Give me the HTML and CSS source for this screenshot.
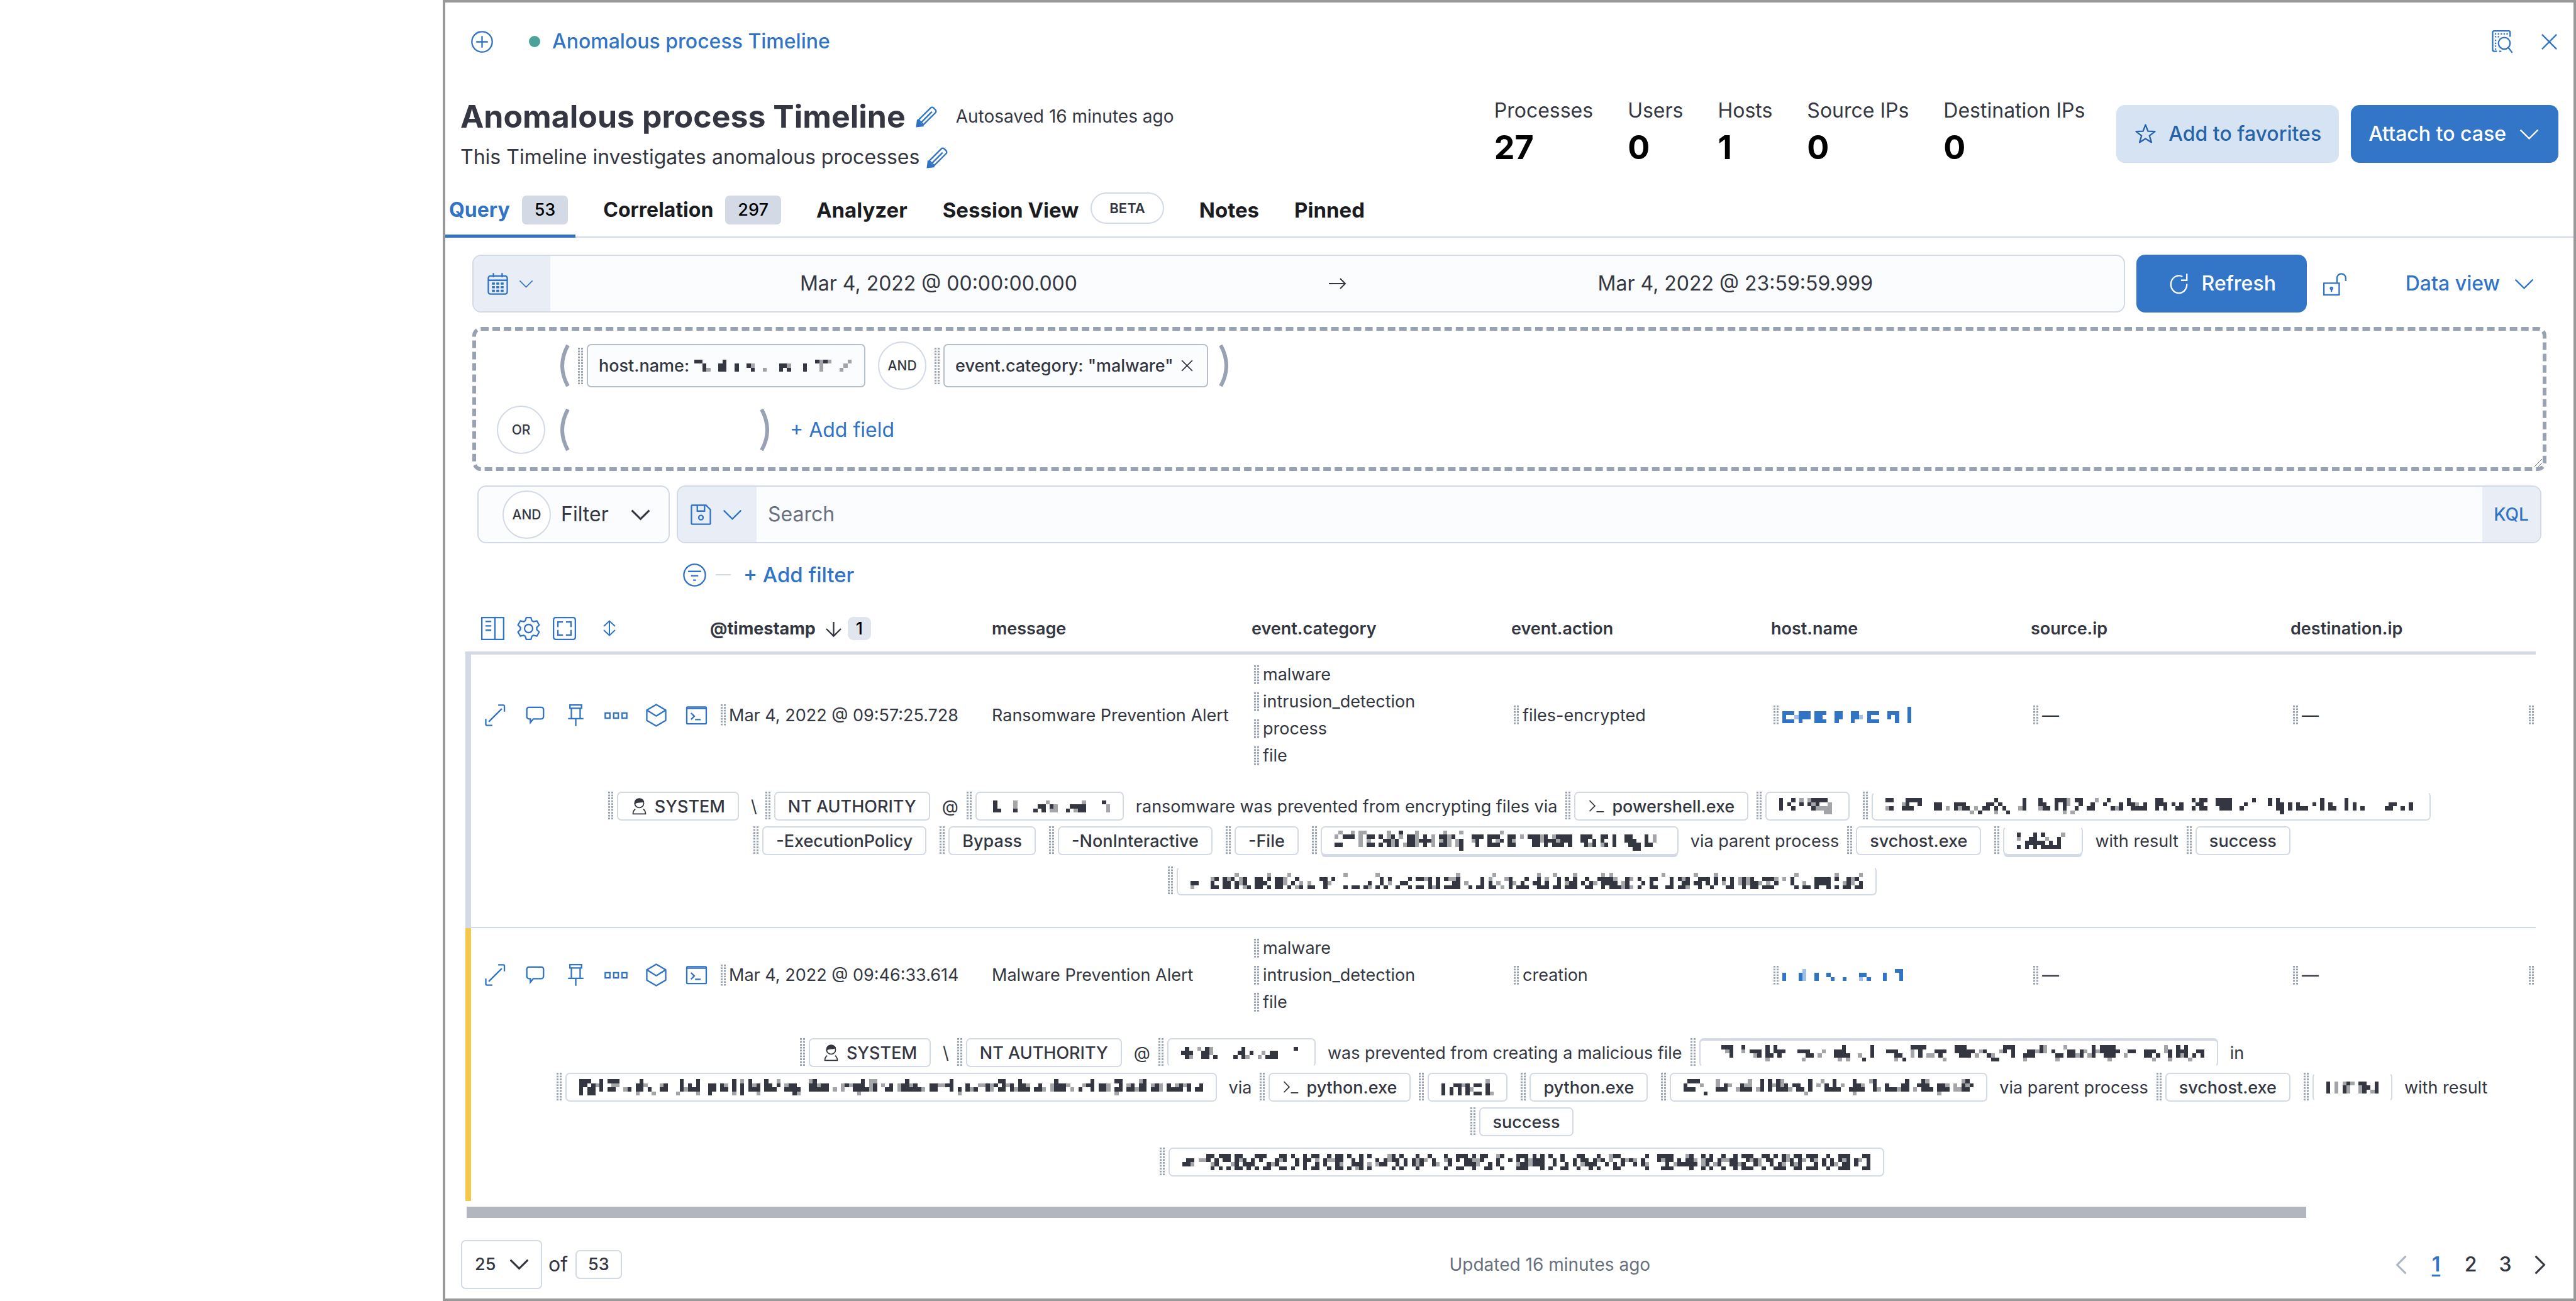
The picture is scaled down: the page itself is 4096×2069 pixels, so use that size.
FILE: index.html
```
<!DOCTYPE html>
<html lang="en">
<head>
<meta charset="utf-8">
<meta name="viewport" content="width=device-width, initial-scale=1">
<title>Anomalous process Timeline</title>
<link rel="stylesheet" href="styles.css">
<script src="script.js" defer></script>
</head>
<body>
<svg class="sprite" aria-hidden="true">
  <symbol id="i-plus" viewBox="0 0 16 16"><circle cx="8" cy="8" r="7"/><path d="M8 4v8M4 8h8"/></symbol>
  <symbol id="i-pencil" viewBox="0 0 16 16"><path d="M1.6 14.4l.7-4L10.700 2a1.400 1.400 0 0 1 2 0l1.300 1.300a1.400 1.400 0 0 1 0 2L5.600 13.700zM4.600 11.600l7-7M2.500 10.200l3.300 3.300"/><path class="solid" d="M1.200 14.800l.5-4 3.500 3.500z"/></symbol>
  <symbol id="i-calendar" viewBox="0 0 16 16"><rect x="1.500" y="2.500" width="13" height="12.500" rx="1.500"/><path d="M1.500 5.500h13M5 .5v3M11 .5v3"/><path class="solid" stroke="none" d="M4 7h2v1.500H4zM7 7h2v1.500H7zM10 7h2v1.500h-2zM4 9.500h2V11H4zM7 9.500h2V11H7zM10 9.500h2V11h-2zM4 12h2v1.500H4zM7 12h2v1.500H7zM10 12h2v1.500h-2z"/></symbol>
  <symbol id="i-down" viewBox="0 0 16 16"><path d="M2 5l6 6 6-6"/></symbol>
  <symbol id="i-left" viewBox="0 0 16 16"><path d="M11 2L5 8l6 6"/></symbol>
  <symbol id="i-right" viewBox="0 0 16 16"><path d="M5 2l6 6-6 6"/></symbol>
  <symbol id="i-arrow" viewBox="0 0 16 16"><path d="M1.500 8h13M10.500 4l4 4-4 4"/></symbol>
  <symbol id="i-star" viewBox="0 0 16 16"><path stroke-linejoin="round" d="M8 1.500l1.700 4.400 4.800.2-3.800 2.900 1.400 4.600L8 11l-4.100 2.600 1.400-4.600-3.800-2.900 4.800-.2z"/></symbol>
  <symbol id="i-inspect" viewBox="0 0 16 16"><path d="M13.500 4.500v-3a1 1 0 0 0-1-1h-10a1 1 0 0 0-1 1v12a1 1 0 0 0 1 1h2"/><circle cx="9.500" cy="9" r="4"/><path d="M12.300 12l2.700 3.500M6 14.500h1.500"/><path stroke-dasharray="1 1" d="M3 2.500h9M3 4.500h3.500M3.500 6.500v7"/></symbol>
  <symbol id="i-cross" viewBox="0 0 16 16"><path d="M3 3l10 10M13 3L3 13"/></symbol>
  <symbol id="i-refresh" viewBox="0 0 16 16"><path d="M13.500 8A5.500 6 0 1 1 10.500 3M13.500 1v4.500H9.500"/></symbol>
  <symbol id="i-lock" viewBox="0 0 16 16"><path d="M.5 7.500h10.500v8H.5zM9.500 7.500V4a3 3 0 0 1 6 0v2"/><circle cx="5.700" cy="11" r=".7"/><path d="M5.700 11.500v2"/></symbol>
  <symbol id="i-save" viewBox="0 0 16 16"><path d="M1.500 2a.5.500 0 0 1 .5-.5h9.500l3 3V14a.5.500 0 0 1-.5.500H2a.5.500 0 0 1-.5-.5zM5.500 1.500v4h5v-4"/><circle cx="8" cy="10" r="1.500"/></symbol>
  <symbol id="i-filter" viewBox="0 0 16 16"><circle cx="8" cy="8" r="7.400"/><path d="M3.500 5.500h9M5.500 8.500h5M7 11.500h2"/></symbol>
  <symbol id="i-fields" viewBox="0 0 16 16"><path d="M.5.500h15v15H.5zM9.500.500v15M3 3.200h4M3 6.200h4M3 9.200h4"/></symbol>
  <symbol id="i-gear" viewBox="0 0 16 16"><path stroke-linejoin="round" d="M6.400.500h3.200l.7 2.200 1.100.6 2.300-.5 1.600 2.800-1.700 1.700v1.400l1.700 1.700-1.600 2.800-2.300-.5-1.100.6-.7 2.200H6.400l-.7-2.200-1.100-.6-2.300.5L.7 10.400l1.700-1.700V7.300L.7 5.600l1.600-2.800 2.300.5 1.100-.6z"/><circle cx="8" cy="8" r="2.800"/></symbol>
  <symbol id="i-full" viewBox="0 0 16 16"><rect x=".5" y=".5" width="15" height="15" rx="1.500"/><path d="M3.500 7V3.500H7M9 3.500h3.500V7M12.500 9v3.500H9M7 12.500H3.500V9"/></symbol>
  <symbol id="i-sort" viewBox="0 0 16 16"><path d="M8 2.500v11M3.500 6.500L8 2.300l4.500 4.200M3.500 9.500L8 13.700l4.500-4.200"/></symbol>
  <symbol id="i-sortdown" viewBox="0 0 16 16"><path d="M8 3.500v9.500M3 8.200l5 5 5-5"/></symbol>
  <symbol id="i-expand" viewBox="0 0 16 16"><path d="M3.500 12.500l9-9M10 1h3.500a.8.800 0 0 1 .8.800V5.500M6 15H2.300a.8.800 0 0 1-.8-.8V10.500"/></symbol>
  <symbol id="i-comment" viewBox="0 0 16 16"><path d="M3.500 2.500h8.500a1.500 1.500 0 0 1 1.500 1.500v5a1.500 1.500 0 0 1-1.500 1.500H6.500L4.500 13v-2.500h-1A1.500 1.500 0 0 1 2 9V4a1.500 1.500 0 0 1 1.500-1.500z"/></symbol>
  <symbol id="i-pin" viewBox="0 0 16 16"><path d="M4 .9h8v2.300H4zM5 3.200v7M11 3.200v7M2.700 10.300h10.600M8 10.500v5"/></symbol>
  <symbol id="i-dots" viewBox="0 0 16 16"><path d="M.6 6.400h3.200v3.600H.6zM6.400 6.400h3.200v3.600H6.400zM12.200 6.400h3.200v3.600h-3.200z"/></symbol>
  <symbol id="i-cube" viewBox="0 0 16 16"><path stroke-linejoin="round" d="M8 .6l6.500 3.800v7.200L8 15.400l-6.500-3.800V4.400zM1.500 4.400L8 8.500l6.500-4.100"/></symbol>
  <symbol id="i-session" viewBox="0 0 16 16"><rect x="1.300" y="2.300" width="13.400" height="11.600" rx=".6"/><path d="M1.300 3.300h13.400M4.200 6.500l2.300 2.200-2.300 2.200M7 11h3.800"/></symbol>
  <symbol id="i-user" viewBox="0 0 16 16"><circle cx="8" cy="5" r="4.200"/><path d="M4.300 10.500c-1.300.9-2.200 2.500-2.200 4.500h11.800c0-2-.9-3.600-2.200-4.500"/><path class="solid" d="M3.800 5.200C4.500 4.600 5 4 8 4s3.500-.6 4-.8C11.300 1.600 10 .8 8 .8 5.500.800 3.700 2.500 3.800 5.200z"/></symbol>
  <symbol id="i-prompt" viewBox="0 0 16 16"><path d="M1.500 2.500l5 5-5 5M8 13h7"/></symbol>
  <symbol id="i-open" viewBox="0 0 15 67"><path stroke-width="6" d="M12 1Q-6 34 12 66"/></symbol>
  <symbol id="i-close" viewBox="0 0 15 67"><path stroke-width="6" d="M3 1Q21 34 3 66"/></symbol>
</svg>

<main class="panel">
  <div class="topbar">
    <button class="ghost" aria-label="Create new timeline"><svg class="icon"><use href="#i-plus"/></svg></button>
    <span class="status"></span>
    <a class="crumb" href="#timeline">Anomalous process Timeline</a>
    <button class="ghost push" aria-label="Inspect"><svg class="icon"><use href="#i-inspect"/></svg></button>
    <button class="ghost" aria-label="Close"><svg class="icon"><use href="#i-cross"/></svg></button>
  </div>

  <header class="header" id="timeline">
    <div class="heading">
      <div class="title-row">
        <h1>Anomalous process Timeline</h1>
        <button class="ghost" aria-label="Edit title"><svg class="icon"><use href="#i-pencil"/></svg></button>
        <span class="autosaved">Autosaved 16 minutes ago</span>
      </div>
      <div class="desc-row">
        <p>This Timeline investigates anomalous processes</p>
        <button class="ghost" aria-label="Edit description"><svg class="icon"><use href="#i-pencil"/></svg></button>
      </div>
    </div>
    <dl class="stats">
      <div><dt>Processes</dt><dd>27</dd></div>
      <div><dt>Users</dt><dd>0</dd></div>
      <div><dt>Hosts</dt><dd>1</dd></div>
      <div><dt>Source IPs</dt><dd>0</dd></div>
      <div><dt>Destination IPs</dt><dd>0</dd></div>
    </dl>
    <div class="actions">
      <button class="btn btn-soft"><svg class="icon"><use href="#i-star"/></svg>Add to favorites</button>
      <button class="btn btn-fill">Attach to case<svg class="icon"><use href="#i-down"/></svg></button>
    </div>
  </header>

  <nav class="tabs" role="tablist">
    <button role="tab" class="tab is-active">Query <span class="badge">53</span></button>
    <button role="tab" class="tab">Correlation <span class="badge">297</span></button>
    <button role="tab" class="tab tab-plain">Analyzer</button>
    <button role="tab" class="tab tab-plain">Session View <span class="beta">BETA</span></button>
    <button role="tab" class="tab tab-plain">Notes</button>
    <button role="tab" class="tab tab-plain">Pinned</button>
  </nav>

  <section class="date-row">
    <div class="date-bar">
      <button class="prepend" aria-label="Date quick select"><svg class="icon"><use href="#i-calendar"/></svg><svg class="icon icon-s"><use href="#i-down"/></svg></button>
      <button class="date">Mar 4, 2022 @ 00:00:00.000</button>
      <svg class="icon icon-m date-arrow"><use href="#i-arrow"/></svg>
      <button class="date">Mar 4, 2022 @ 23:59:59.999</button>
    </div>
    <button class="btn btn-fill refresh"><svg class="icon"><use href="#i-refresh"/></svg>Refresh</button>
    <button class="ghost lock" aria-label="Lock date"><svg class="icon"><use href="#i-lock"/></svg></button>
    <button class="ghost data-view">Data view<svg class="icon"><use href="#i-down"/></svg></button>
  </section>

  <section class="builder">
    <div class="group">
      <span class="op-space"></span>
      <svg class="paren"><use href="#i-open"/></svg>
      <span class="handle tall"></span>
      <span class="clause">host.name:<span class="mosaic" data-rows="3" data-ink="443000370030021000000321000300404000000" data-tint="000100000000002001000002000000070400124"></span></span>
      <span class="op">AND</span>
      <span class="handle tall"></span>
      <span class="clause">event.category: "malware"<button class="ghost" aria-label="Remove"><svg class="icon icon-s"><use href="#i-cross"/></svg></button></span>
      <svg class="paren"><use href="#i-close"/></svg>
    </div>
    <div class="group">
      <span class="op">OR</span>
      <svg class="paren"><use href="#i-open"/></svg>
      <span class="empty"></span>
      <svg class="paren"><use href="#i-close"/></svg>
      <button class="ghost add-field">+ Add field</button>
    </div>
    <svg class="grip" viewBox="0 0 14 14"><path d="M1 13L13 1M7 13l6-6"/></svg>
  </section>

  <section class="search-row">
    <button class="filter-box"><span class="op">AND</span>Filter<svg class="icon"><use href="#i-down"/></svg></button>
    <div class="search">
      <button class="prepend" aria-label="Saved queries"><svg class="icon"><use href="#i-save"/></svg><svg class="icon"><use href="#i-down"/></svg></button>
      <input type="search" placeholder="Search" aria-label="Search">
      <button class="kql">KQL</button>
    </div>
  </section>

  <div class="filters">
    <button class="ghost" aria-label="Filter options"><svg class="icon"><use href="#i-filter"/></svg></button>
    <span class="rule"></span>
    <button class="ghost add-filter">+ Add filter</button>
  </div>

  <div class="results">
    <table class="grid">
      <colgroup><col class="c-act"><col class="c-time"><col class="c-std"><col class="c-std"><col class="c-std"><col class="c-std"><col class="c-std"><col><col class="c-end"></colgroup>
      <thead>
        <tr>
          <th><span class="tools">
            <button class="ghost" aria-label="Fields"><svg class="icon"><use href="#i-fields"/></svg></button>
            <button class="ghost" aria-label="Settings"><svg class="icon"><use href="#i-gear"/></svg></button>
            <button class="ghost" aria-label="Full screen"><svg class="icon"><use href="#i-full"/></svg></button>
            <button class="ghost sort" aria-label="Sort fields"><svg class="icon icon-m"><use href="#i-sort"/></svg></button>
          </span></th>
          <th><span class="sorted">@timestamp<svg class="icon"><use href="#i-sortdown"/></svg><span class="count">1</span></span></th>
          <th>message</th><th>event.category</th><th>event.action</th><th>host.name</th><th>source.ip</th><th>destination.ip</th><th></th>
        </tr>
      </thead>
      <tbody class="event">
        <tr>
          <td><span class="row-tools">
            <button class="ghost" aria-label="Expand"><svg class="icon"><use href="#i-expand"/></svg></button>
            <button class="ghost" aria-label="Comment"><svg class="icon"><use href="#i-comment"/></svg></button>
            <button class="ghost" aria-label="Pin"><svg class="icon"><use href="#i-pin"/></svg></button>
            <button class="ghost" aria-label="More"><svg class="icon"><use href="#i-dots"/></svg></button>
            <button class="ghost" aria-label="Analyze"><svg class="icon"><use href="#i-cube"/></svg></button>
            <button class="ghost" aria-label="Session"><svg class="icon"><use href="#i-session"/></svg></button>
          </span></td>
          <td><span class="cell time"><i class="handle"></i>Mar 4, 2022 @ 09:57:25.728</span></td>
          <td>Ransomware Prevention Alert</td>
          <td><span class="cell"><i class="handle"></i>malware</span><span class="cell"><i class="handle"></i>intrusion_detection</span><span class="cell"><i class="handle"></i>process</span><span class="cell"><i class="handle"></i>file</span></td>
          <td><span class="cell"><i class="handle"></i>files-encrypted</span></td>
          <td><a class="cell" href="#host"><i class="handle"></i><span class="mosaic" data-rows="4" data-ink="7550766077500760076007550064700f" data-tint="00020000020002000002000000200000"></span></a></td>
          <td><span class="cell"><i class="handle"></i>—</span></td>
          <td><span class="cell"><i class="handle"></i>—</span></td>
          <td><span class="cell"><i class="handle"></i></span></td>
        </tr>
        <tr>
          <td colspan="9" class="story">
            <div class="line">
              <span class="field"><i class="handle"></i><span class="chip"><svg class="icon icon-s"><use href="#i-user"/></svg>SYSTEM</span></span>
              <span class="word">\</span>
              <span class="field"><i class="handle"></i><span class="chip">NT AUTHORITY</span></span>
              <span class="word">@</span>
              <span class="field"><i class="handle"></i><span class="chip"><span class="mosaic" data-rows="3" data-ink="071000100001230200012233000040" data-tint="000000600000204130000104000003"></span></span></span>
              <span class="word">ransomware was prevented from encrypting files via</span>
              <span class="field tight"><i class="handle"></i><span class="chip"><svg class="icon icon-s"><use href="#i-prompt"/></svg>powershell.exe</span></span>
              <span class="field"><i class="handle"></i><span class="chip"><span class="mosaic" data-rows="4" data-ink="e04a0404ac8800" data-tint="00000808422370"></span></span></span>
              <span class="field"><i class="handle"></i><span class="chip open-top"><span class="mosaic" data-rows="4" data-ink="8a002ea8c000660006462001264a421000e000c620e8e00ac02600482060c622600ec6042600a4ea00ceee002408000c0e7060622040e06200e06020000026402060" data-tint="200064000000000200200120040100000220006000201c12000080000200004" ></span></span></span>
            </div>
            <div class="line">
              <span class="field"><i class="handle"></i><span class="chip">-ExecutionPolicy</span></span>
              <span class="field"><i class="handle"></i><span class="chip">Bypass</span></span>
              <span class="field"><i class="handle"></i><span class="chip">-NonInteractive</span></span>
              <span class="field"><i class="handle"></i><span class="chip">-File</span></span>
              <span class="field"><i class="handle"></i><span class="chip smear"><span class="mosaic" data-rows="5" data-ink="22888000aa0a4686g0ee04e400ae0807008e80eaa40ea0008ee0e46aece00ce860ca0e00ce730e2000" data-tint="8g00g0ug40000o608200u000e04ge06g00c080024g00e080000c00e60060008200e0000006000e0c00"></span></span></span>
              <span class="word">via parent process</span>
              <span class="field"><i class="handle"></i><span class="chip">svchost.exe</span></span>
              <span class="field"><i class="handle"></i><span class="chip smear open-top"><span class="mosaic" data-rows="4" data-ink="9036f2b131700" data-tint="4000800400080"></span></span></span>
              <span class="word">with result</span>
              <span class="field last"><i class="handle"></i><span class="chip">success</span></span>
            </div>
            <div class="line spaced">
              <span class="field last"><i class="handle"></i><span class="chip open-top"><span class="mosaic" data-rows="4" data-ink="22000350734306107725077012410110470400101101201614012250550707051370010170310007013502713017053702530476731070052075001705360274616041700707305552000610110766705017053" data-tint="10000400040861000008000680120200002000800000108002000000004010004480200000682140200000804080061800402080840305000020080200610800208060206060020204040080200600008020608"></span></span></span>
            </div>
          </td>
        </tr>
      </tbody>
      <tbody class="event alert">
        <tr>
          <td><span class="row-tools">
            <button class="ghost" aria-label="Expand"><svg class="icon"><use href="#i-expand"/></svg></button>
            <button class="ghost" aria-label="Comment"><svg class="icon"><use href="#i-comment"/></svg></button>
            <button class="ghost" aria-label="Pin"><svg class="icon"><use href="#i-pin"/></svg></button>
            <button class="ghost" aria-label="More"><svg class="icon"><use href="#i-dots"/></svg></button>
            <button class="ghost" aria-label="Analyze"><svg class="icon"><use href="#i-cube"/></svg></button>
            <button class="ghost" aria-label="Session"><svg class="icon"><use href="#i-session"/></svg></button>
          </span></td>
          <td><span class="cell time"><i class="handle"></i>Mar 4, 2022 @ 09:46:33.614</span></td>
          <td>Malware Prevention Alert</td>
          <td><span class="cell"><i class="handle"></i>malware</span><span class="cell"><i class="handle"></i>intrusion_detection</span><span class="cell"><i class="handle"></i>file</span></td>
          <td><span class="cell"><i class="handle"></i>creation</span></td>
          <td><a class="cell" href="#host"><i class="handle"></i><span class="mosaic" data-rows="3" data-ink="300030003002100100022100030047" data-tint="000007000000000000010000000000"></span></a></td>
          <td><span class="cell"><i class="handle"></i>—</span></td>
          <td><span class="cell"><i class="handle"></i>—</span></td>
          <td><span class="cell"><i class="handle"></i></span></td>
        </tr>
        <tr>
          <td colspan="9" class="story">
            <div class="line">
              <span class="field"><i class="handle"></i><span class="chip"><svg class="icon icon-s"><use href="#i-user"/></svg>SYSTEM</span></span>
              <span class="word">\</span>
              <span class="field"><i class="handle"></i><span class="chip">NT AUTHORITY</span></span>
              <span class="word">@</span>
              <span class="field"><i class="handle"></i><span class="chip open-bottom"><span class="mosaic" data-rows="3" data-ink="272003701000012702000133000040" data-tint="001040060000000410012102000000"></span></span></span>
              <span class="word">was prevented from creating a malicious file</span>
              <span class="field"><i class="handle"></i><span class="chip smear-top"><span class="mosaic" data-rows="4" data-ink="0088e00804460e2c6400044620000066e200010e00044621088e80046400cee640042110c8e002660c004220660600e0ceee400440066420060e4e0246" data-tint="0004600400200104200004100024002141002000000401000600022001000060024002140020010040c00108002042040010002040020100c1042010"></span></span></span>
              <span class="word">in</span>
            </div>
            <div class="line">
              <span class="field"><i class="handle"></i><span class="chip"><span class="mosaic" data-rows="4" data-ink="fcb70e0aa800206e020026000e062e00760620e070e260e62402672006e26600004066e2060026006e2620066004e02060200604ae060e62026000e66000204e06600ae02606e02600622606026" data-tint="0031400044020010401040001020010020044010c00410060c0420100e06440206440100ec04020600440202044020100204406002402044000206e00420040204060100402c00406002404"></span></span></span>
              <span class="word">via</span>
              <span class="field tight"><i class="handle"></i><span class="chip"><svg class="icon icon-s"><use href="#i-prompt"/></svg>python.exe</span></span>
              <span class="field"><i class="handle"></i><span class="chip"><span class="mosaic" data-rows="4" data-ink="7034707055070" data-tint="0020040200081"></span></span></span>
              <span class="field"><i class="handle"></i><span class="chip">python.exe</span></span>
              <span class="field"><i class="handle"></i><span class="chip"><span class="mosaic" data-rows="4" data-ink="6aa8010022600062200e0e0e2604620e00062e2002e6200e0062206e004e6206620006a4" data-tint="00204100c0240204e0200040e02040100480200400104080204002000240c00104062c4"></span></span></span>
              <span class="word">via parent process</span>
              <span class="field"><i class="handle"></i><span class="chip">svchost.exe</span></span>
              <span class="field"><i class="handle"></i><span class="chip open-top open-bottom"><span class="mosaic" data-rows="3" data-ink="7000340047207" data-tint="0070434030010"></span></span></span>
              <span class="word">with result</span>
            </div>
            <div class="line">
              <span class="field last"><i class="handle"></i><span class="chip">success</span></span>
            </div>
            <div class="line spaced">
              <span class="field last"><i class="handle"></i><span class="chip"><span class="mosaic" data-rows="4" data-ink="264000c969cd0f96369c93069d0960f49b0690fd0962f0904260d696069608600960d9e6b0c93069040dbf0e6f0960d3069c6369420b9604206900c9fd0626f2096d06906f0bd9609c693d069f09db06960dbf0609f" data-tint="002044020100204600040020c40020040600440200410020600c4002006040020c004000460020c004020060040020400602004400c200406002004400200c040600204400200406004002c0204006040020460040"></span></span></span>
            </div>
          </td>
        </tr>
      </tbody>
    </table>
    <div class="scroll"></div>
  </div>

  <footer class="footer">
    <span class="select"><select aria-label="Rows per page"><option>25</option></select><svg class="icon"><use href="#i-down"/></svg></span>
    <span class="of">of</span>
    <span class="chip total">53</span>
    <span class="updated">Updated 16 minutes ago</span>
    <nav class="pages">
      <button class="ghost off" aria-label="Previous page"><svg class="icon"><use href="#i-left"/></svg></button>
      <a class="on" href="#1">1</a><a href="#2">2</a><a href="#3">3</a>
      <button class="ghost" aria-label="Next page"><svg class="icon"><use href="#i-right"/></svg></button>
    </nav>
  </footer>
</main>
</body>
</html>
```
FILE: styles.css
```
:root {
  --blue: #3173c5;
  --text: #343741;
  --line: #d3dae6;
  --muted: #98a2b3;
  --field: #fbfcfd;
}
* { box-sizing: border-box; }
body { margin: 0; background: #fff; color: var(--text); font: 400 32px/44px Inter, "Liberation Sans", sans-serif; }
button, input, select { font: inherit; color: inherit; margin: 0; padding: 0; border: 0; background: none; }
a { color: var(--blue); text-decoration: none; }
h1, p, dl, dd { margin: 0; }
i { font-style: normal; }

.sprite { position: absolute; width: 0; height: 0; }
.icon { width: 37px; height: 37px; flex: none; }
.icon-m { width: 32px; height: 32px; }
.icon-s { width: 27px; height: 27px; }
symbol, .icon, .paren { fill: none; stroke: currentColor; }
.solid { fill: currentColor; }
.ghost { display: inline-flex; align-items: center; color: var(--blue); }

.panel { margin-left: 704px; min-height: 100vh; border: 4px solid #999; background: #fff; }

.topbar { display: flex; align-items: center; height: 124px; padding: 0 20px 0 40px; }
.status { width: 18px; height: 18px; margin: 0 19px 0 56px; border-radius: 50%; background: #4aa399; }
.crumb { font-weight: 500; }
.push { margin: 0 38px 0 auto; }

.header { display: flex; align-items: flex-start; padding: 26px 24px 14px; height: 158px; }
.heading { flex: 1; }
.title-row, .desc-row { display: flex; align-items: center; }
.title-row { height: 62px; margin-bottom: 12px; gap: 15px; }
h1 { font-size: 50px; line-height: 62px; font-weight: 700; }
.autosaved { margin-left: 13px; font-size: 28px; }
.desc-row { gap: 10px; }
.stats { display: flex; gap: 55px; margin-right: 50px; }
.stats dd { margin-top: 11px; font-size: 52px; line-height: 52px; font-weight: 700; color: #000; }
.actions { display: flex; gap: 19px; margin-top: 13px; }
.btn { display: inline-flex; align-items: center; justify-content: center; gap: 18px; height: 92px; padding: 0 28px; border-radius: 14px; font-weight: 500; white-space: nowrap; }
.btn-soft { background: #d6e3f3; color: #2663a8; }
.btn-fill { background: #3376c8; color: #fff; }

.tabs { display: flex; gap: 38px; height: 92px; border-bottom: 2px solid var(--line); }
.tab { display: flex; align-items: center; gap: 19px; height: 92px; padding: 3px 12px 0 6px; font-weight: 700; color: #1a1c21; }
.tab.is-active { color: var(--blue); border-bottom: 5px solid var(--blue); padding-top: 8px; }
.tab-plain { font-size: 33px; }
.badge { padding: 0 20px; border-radius: 7px; background: var(--line); color: #000; font-size: 27px; line-height: 46px; font-weight: 500; }
.beta { padding: 0 28px; border: 2px solid var(--line); border-radius: 25px; color: var(--text); font-size: 22px; line-height: 46px; font-weight: 600; margin-top: -6px; }

.date-row { display: flex; align-items: center; padding: 27px 60px 0 43px; }
.date-bar { display: flex; flex: 1; align-items: center; height: 92px; border: 2px solid var(--line); border-radius: 14px; background: var(--field); overflow: hidden; }
.prepend { display: flex; align-items: center; justify-content: center; gap: 13px; align-self: stretch; width: 122px; padding-right: 6px; background: #e9edf5; color: var(--blue); }
.date { flex: 1; text-align: center; }
.refresh { width: 271px; margin-left: 18px; }
.lock { margin: 0 94px 0 26px; }
.data-view { gap: 20px; font-weight: 500; }

.builder { position: relative; display: grid; gap: 25px; margin: 23px 43px 0; padding: 17px 33px 21px; border: 6px dashed var(--muted); border-radius: 14px; }
.group { display: flex; align-items: center; }
.op, .op-space { width: 77px; height: 77px; flex: none; }
.op { border: 2px solid var(--line); border-radius: 50%; background: #fff; font-size: 21px; line-height: 73px; font-weight: 500; text-align: center; }
.paren { width: 15px; height: 67px; color: var(--muted); }
.op + .paren, .op-space + .paren { margin-left: 24px; }
.clause + .op { margin-left: 20px; }
.handle { display: block; flex: none; width: 8px; height: 46px; background: conic-gradient(from 270deg at 3px 3px, #98a2b3 90deg, transparent 0) 0 0 / 5px 10%; }
.handle.tall { height: 58px; margin: 0 6px 0 13px; background-size: 5px 8%; }
.clause { display: flex; align-items: center; gap: 8px; height: 69px; padding: 0 18px 0 17px; border: 2px solid #b8bfcc; border-radius: 7px; background: var(--field); font-size: 27px; font-weight: 500; white-space: nowrap; }
.clause .mosaic { margin-right: 2px; }
.clause .ghost { color: var(--text); }
.clause + .paren { margin-left: 17px; }
.empty { width: 302px; }
.add-field { margin-left: 33px; }
.grip { position: absolute; right: 0; bottom: 0; width: 14px; height: 14px; stroke: #69707d; }

.search-row { display: flex; gap: 11px; padding: 23px 51px 0; }
.filter-box { display: flex; align-items: center; width: 306px; height: 92px; padding-left: 38px; border: 2px solid var(--line); border-radius: 14px; background: var(--field); }
.filter-box .op { margin-right: 16px; }
.filter-box .icon { margin-left: 32px; stroke-width: 1.3; }
.search { display: flex; flex: 1; height: 92px; border: 2px solid var(--line); border-radius: 14px; background: var(--field); overflow: hidden; }
.search .prepend { width: 125px; padding-right: 2px; }
.search input { flex: 1; padding-left: 18px; outline: 0; appearance: none; }
.search input::placeholder { color: #69707d; opacity: 1; }
.kql { width: 92px; background: #e9edf5; color: var(--blue); font-size: 28px; font-weight: 500; }

.filters { display: flex; align-items: center; padding: 28px 0 0 378px; }
.rule { width: 24px; height: 2px; margin: 0 20px 0 15px; background: var(--line); }
.add-filter { font-size: 33px; font-weight: 500; }

.results { margin: 26px 60px 0 32px; }
.grid { width: 100%; table-layout: fixed; border-collapse: separate; border-spacing: 0; font-size: 27px; line-height: 43px; }
.c-act { width: 389px; }
.c-time { width: 448px; }
.c-std { width: 413px; }
.c-end { width: 11px; }
th, td { padding: 0; text-align: left; white-space: nowrap; }
th { height: 79px; border-bottom: 5px solid var(--line); font-weight: 600; }
.tools, .row-tools, .sorted { display: flex; align-items: center; }
.tools { gap: 20px; padding-left: 25px; color: var(--blue); }
.sort { margin-left: 17px; }
.sorted { gap: 10px; font-weight: 700; }
.count { margin-left: -6px; padding: 0 13px; border-radius: 9px; background: #e0e5ee; color: #000; line-height: 37px; font-weight: 500; }
.row-tools { gap: 27px; padding-left: 20px; }
.event tr:first-child td { padding-top: 10px; }
.event td:first-child { border-left: 9px solid var(--line); }
.event.alert td:first-child { border-left-color: #f5c84b; }
.cell { display: flex; align-items: center; gap: 6px; height: 43px; }
.cell .handle { height: 30px; background-size: 5px 15%; margin-left: 4px; }
.cell.time { margin-left: 13px; gap: 5px; }
.cell.time .handle { height: 34px; background-size: 5px 13%; }
.event td:last-child .cell .handle { margin-left: 0; }

.story { padding: 36px 0 50px 59px; border-bottom: 2px solid var(--line); }
.alert .story { padding-bottom: 39px; border-bottom: 0; }
.line { display: flex; justify-content: center; align-items: center; gap: 13px; height: 46px; }
.line + .line { margin-top: 9px; }
.line + .spaced { margin-top: 18px; }
.field { display: flex; align-items: center; gap: 6px; margin-right: 8px; }
.field.tight, .field.last { margin-right: 0; }
.field + .word { margin-left: -2px; }
.chip { display: inline-flex; align-items: center; gap: 11px; height: 46px; padding: 0 20px; border: 2px solid var(--line); border-radius: 7px; font-size: 27px; font-weight: 500; white-space: nowrap; }
.open-top { border-top-color: transparent; }
.open-bottom { border-bottom-color: transparent; }
.smear { box-shadow: 0 4px 0 -1px var(--line); }
.smear-top { border-top-width: 4px; border-bottom-color: transparent; }
.mosaic { display: flex; }
.mosaic svg { display: block; fill: currentColor; shape-rendering: crispEdges; }

.scroll { width: 2925px; max-width: 100%; height: 18px; margin: 9px 0 0 2px; background: #b2b6be; }

.footer { display: flex; align-items: center; padding: 35px 35px 15px 25px; }
.select { position: relative; width: 129px; height: 78px; }
.select select { width: 100%; height: 100%; padding-left: 20px; border: 2px solid var(--line); border-radius: 7px; appearance: none; background: #fff; font-size: 27px; font-weight: 500; }
.select .icon { position: absolute; right: 18px; top: 20px; pointer-events: none; stroke-width: 1.3; }
.of { margin: 0 12px 0 10px; }
.total { padding: 0 18px; }
.updated { flex: 1; padding-left: 140px; text-align: center; color: #69707d; font-size: 28px; }
.pages { display: flex; align-items: center; gap: 18px; font-weight: 500; }
.pages a { width: 37px; text-align: center; color: var(--text); }
.pages .ghost { color: var(--text); stroke-width: 1.3; }
.pages .on { color: var(--blue); font-weight: 600; text-decoration: underline; text-underline-offset: 5px; text-decoration-thickness: 3px; }
.pages .off { color: #abb4c4; }
```
FILE: script.js
```
// Redacted values: one base-32 digit per column, each bit a cell, top row first.
const CELL = 6.4;
document.querySelectorAll('.mosaic').forEach((el) => {
  const rows = Number(el.dataset.rows);
  const path = (digits) => [...digits].map((d, x) => {
    const bits = parseInt(d, 32);
    let out = '';
    for (let y = 0; y < rows; y += 1) {
      if (bits & (1 << (rows - 1 - y))) out += `M${x} ${y}h1v1h-1z`;
    }
    return out;
  }).join('');
  const { ink, tint } = el.dataset;
  const width = Math.round(ink.length * CELL);
  const height = Math.round(rows * CELL);
  el.innerHTML = `<svg width="${width}" height="${height}" viewBox="0 0 ${ink.length} ${rows}" preserveAspectRatio="none" stroke="none">`
    + `<path d="${path(ink)}"/><path opacity=".45" d="${path(tint)}"/></svg>`;
});
```
